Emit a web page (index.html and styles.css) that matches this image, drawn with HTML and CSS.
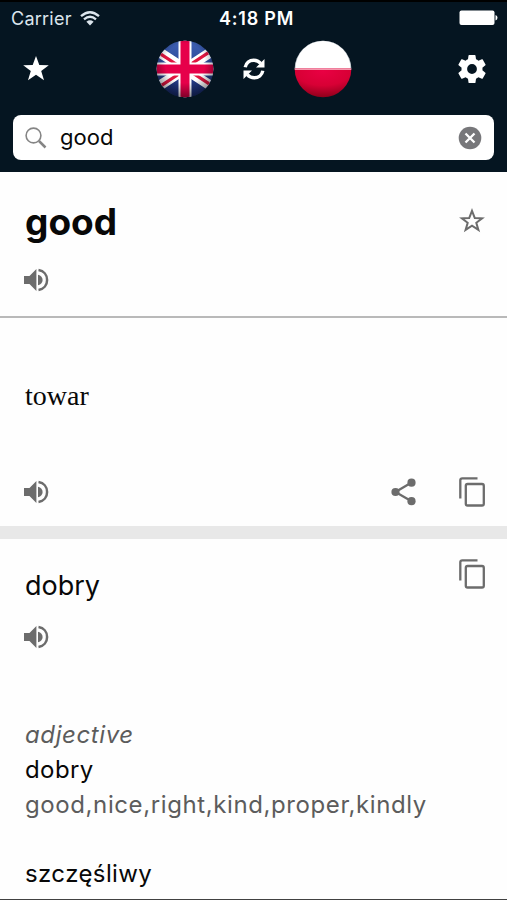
FILE: index.html
```html
<!DOCTYPE html>
<html lang="en">
<head>
    <meta charset="UTF-8">
    <meta name="viewport" content="width=device-width, initial-scale=1.0">
    <title>good</title>
    <link rel="stylesheet" href="styles.css">
</head>
<body>
    <svg class="symbols" width="0" height="0">
        <symbol id="speaker" viewBox="0 0 25 24">
            <path d="M0 8h5.5L12.4 1v22L5.5 16H0z"/>
            <path d="M14 6.800c3 .8 4.600 2.800 4.600 5.200s-1.600 4.400-4.600 5.200z"/>
            <path d="M14.500 2C20 2.900 23.100 7 23.100 12s-3.100 9.100-8.600 10" fill="none" stroke="currentColor" stroke-width="2.500"/>
        </symbol>
        <symbol id="copy" viewBox="0 0 26 30">
            <path d="M1.300 21.500V3.300q0-2 2-2H18.500" fill="none" stroke="currentColor" stroke-width="2.300"/>
            <rect x="6.800" y="7" width="18" height="21.500" rx="1.800" fill="none" stroke="currentColor" stroke-width="2.300"/>
        </symbol>
    </svg>
    <header>
        <div class="status">
            <div class="carrier">
                <span>Carrier</span>
                <svg width="20" height="15" viewBox="0 0 20 15">
                    <path d="M1 5.200Q10-2.800 19 5.200M4 8.400Q10 3.200 16 8.400" fill="none" stroke="currentColor" stroke-width="2.300"/>
                    <path d="M6.400 10.800Q10 7.900 13.600 10.800L10 14.500z"/>
                </svg>
            </div>
            <span class="time">4:18 PM</span>
            <svg class="battery" width="39" height="16" viewBox="0 0 39 16">
                <rect x=".5" y=".5" width="35" height="14.500" rx="2"/>
                <path d="M36.500 5q2 .5 2 2.700t-2 2.700z"/>
            </svg>
        </div>
        <nav>
            <svg class="favorites" width="26" height="25" viewBox="0 0 26 25">
                <path d="M13 0l3.300 9 9.500.200-7.600 5.800 2.800 9.300-8-5.500-8 5.500 2.800-9.300L.2 9.200 9.700 9z"/>
            </svg>
            <div class="languages">
                <svg width="58" height="58" viewBox="0 0 58 58">
                    <defs>
                        <clipPath id="disc"><circle cx="29" cy="29" r="28.300"/></clipPath>
                        <radialGradient id="shade" cx=".5" cy=".4" r=".62">
                            <stop offset=".55" stop-color="#000" stop-opacity="0"/>
                            <stop offset="1" stop-color="#000" stop-opacity=".5"/>
                        </radialGradient>
                        <linearGradient id="blue" x2="0" y2="1">
                            <stop offset="0" stop-color="#3e61b6"/>
                            <stop offset="1" stop-color="#172a70"/>
                        </linearGradient>
                    </defs>
                    <g clip-path="url(#disc)">
                        <path fill="url(#blue)" d="M0 0h58v58H0z"/>
                        <path d="M-3 8L61 50M-3 50L61 8" stroke="#fff" stroke-width="10"/>
                        <path d="M-3 9L29 30M61 49L29 28M-3 51L29 30M61 7L29 28" stroke="#df1640" stroke-width="3.200"/>
                        <path d="M29 0v58M0 29h58" stroke="#fff" stroke-width="13"/>
                        <path d="M29 0v58M0 29h58" stroke="#e6004a" stroke-width="9"/>
                        <circle cx="29" cy="29" r="29" fill="url(#shade)"/>
                    </g>
                </svg>
                <svg class="swap" width="22" height="22" viewBox="0 0 22 22">
                    <path d="M2.200 9.300C3 4.900 6.500 2.200 10.700 2.200c3 0 5.300 1.300 7 3.200M19.800 12.700c-.8 4.400-4.300 7.100-8.500 7.100-3 0-5.300-1.300-7-3.200" fill="none" stroke="currentColor" stroke-width="3.400"/>
                    <path d="M21.500 1v8.500H13zM.5 21v-8.500H9z"/>
                </svg>
                <svg width="58" height="58" viewBox="0 0 58 58">
                    <defs>
                        <radialGradient id="red" cx=".5" cy=".1" r=".95">
                            <stop offset="0" stop-color="#e90043"/>
                            <stop offset=".5" stop-color="#d80035"/>
                            <stop offset="1" stop-color="#810016"/>
                        </radialGradient>
                    </defs>
                    <g clip-path="url(#disc)">
                        <path fill="#fff" d="M0 0h58v29H0z"/>
                        <path fill="url(#red)" d="M0 28.500h58V58H0z"/>
                        <path d="M0 29.500h58" stroke="#f598ae"/>
                        <path d="M1 28.500a28 28 0 0 1 56 0" fill="none" stroke="#536574" stroke-opacity=".4"/>
                    </g>
                </svg>
            </div>
            <svg class="settings" width="28" height="28" viewBox="2 2 20 20">
                <path fill-rule="evenodd" d="M19.430 12.980c.04-.32.07-.64.07-.98s-.03-.66-.07-.98l2.110-1.650c.19-.15.24-.42.12-.64l-2-3.460c-.12-.22-.39-.3-.61-.22l-2.490 1c-.52-.4-1.080-.73-1.690-.98l-.38-2.650C14.460 2.180 14.250 2 14 2h-4c-.25 0-.46.18-.49.42l-.38 2.650c-.61.25-1.170.59-1.690.98l-2.490-1c-.23-.09-.49 0-.61.22l-2 3.460c-.13.22-.07.49.12.64l2.110 1.650c-.04.32-.07.65-.07.98s.03.66.07.98l-2.110 1.650c-.19.15-.24.42-.12.64l2 3.460c.12.22.39.3.61.22l2.490-1c.52.4 1.080.73 1.690.98l.38 2.650c.03.24.24.42.49.42h4c.25 0 .46-.18.49-.42l.38-2.650c.61-.25 1.170-.59 1.690-.98l2.490 1c.23.09.49 0 .61-.22l2-3.460c.12-.22.07-.49-.12-.64zM12 15.500a3.500 3.500 0 1 1 0-7 3.500 3.500 0 0 1 0 7z"/>
            </svg>
        </nav>
        <div class="search">
            <svg class="magnifier" width="22" height="22" viewBox="0 0 22 22">
                <circle cx="8.500" cy="8.500" r="7.400" stroke-width="1.600"/>
                <path d="M14 14l6.500 6.500" stroke-width="2.500"/>
            </svg>
            <span class="query">good</span>
            <svg width="24" height="24" viewBox="0 0 24 24">
                <circle cx="12" cy="12" r="11.300" fill="#77777a"/>
                <path d="M7.500 7.500l9 9M16.500 7.500l-9 9" stroke="#fff" stroke-width="2.300"/>
            </svg>
        </div>
    </header>
    <main>
        <section class="word">
            <div class="row">
                <h1>good</h1>
                <svg class="star" width="26" height="25" viewBox="0 0 26 25">
                    <path d="M13 2.800l2.800 7.300 7.300.200-5.800 4.500 2.100 7.100-6.400-4.300-6.400 4.300 2.100-7.100-5.800-4.500 7.300-.200z" fill="none" stroke="currentColor" stroke-width="2"/>
                </svg>
            </div>
            <svg class="speaker"><use href="#speaker"/></svg>
        </section>
        <section class="translation">
            <p class="serif">towar</p>
            <div class="row actions">
                <svg class="speaker"><use href="#speaker"/></svg>
                <svg class="share" width="25" height="28" viewBox="0 0 25 28">
                    <path d="M20.500 4.500L4.500 14l16 9.300" fill="none" stroke="currentColor" stroke-width="2.300"/>
                    <circle cx="20.500" cy="4.700" r="4.100"/>
                    <circle cx="4.500" cy="14" r="4.100"/>
                    <circle cx="20.500" cy="23.200" r="4.100"/>
                </svg>
                <svg class="copy"><use href="#copy"/></svg>
            </div>
        </section>
        <section class="details">
            <div class="row">
                <h2>dobry</h2>
                <svg class="copy"><use href="#copy"/></svg>
            </div>
            <svg class="speaker"><use href="#speaker"/></svg>
            <div class="meanings">
                <p class="type">adjective</p>
                <p class="term">dobry</p>
                <p class="synonyms">good,nice,right,kind,proper,kindly</p>
                <p class="term next">szczęśliwy</p>
                <p class="synonyms">happy,lucky,fortunate,good,blissful</p>
            </div>
        </section>
    </main>
</body>
</html>
```
FILE: styles.css
```css
* {
    box-sizing: border-box;
}
body {
    font-family: Inter, "Liberation Sans", sans-serif;
    margin: 0;
    height: 900px;
    overflow: hidden;
    background-color: #fefefe;
    color: #080808;
    border-bottom: 1px solid #414141;
    display: flex;
    flex-direction: column;
}
svg {
    display: block;
    flex: none;
    fill: currentColor;
}
.symbols {
    position: absolute;
}
h1, h2, p {
    margin: 0;
    font-weight: normal;
}
header {
    flex: none;
    height: 172px;
    border-top: 2px solid #000;
    background-color: #051521;
    color: #fff;
}
.status {
    display: grid;
    grid-template-columns: 1fr auto 1fr;
    align-items: center;
    height: 32px;
    padding: 0 9px 0 11px;
    font-size: 18px;
}
.carrier {
    display: flex;
    align-items: center;
    gap: 8px;
    color: #dce5ed;
    letter-spacing: 0.25px;
}
.time {
    font-weight: 600;
    letter-spacing: 0.8px;
    padding-left: 4px;
}
.battery {
    justify-self: end;
}
nav {
    display: flex;
    align-items: center;
    justify-content: space-between;
    height: 69px;
    padding: 0 21px 0 23px;
}
.languages {
    display: flex;
    align-items: center;
    gap: 29px;
}
.search {
    display: flex;
    align-items: center;
    height: 45px;
    margin: 12px 13px 0;
    padding: 0 12px;
    border-radius: 8px;
    background-color: #fff;
    color: #080808;
}
.magnifier {
    fill: none;
    stroke: #858585;
}
.query {
    flex: 1;
    margin-left: 13px;
    font-size: 22px;
    line-height: 26px;
    padding-bottom: 1px;
}
main {
    flex: 1;
    min-height: 0;
    overflow: hidden;
    color: #080808;
}
section {
    padding: 0 22px 0 24px;
}
.row {
    display: flex;
    align-items: center;
    justify-content: space-between;
}
.speaker, .share, .copy, .star {
    color: #6c6c6c;
}
.speaker {
    width: 25px;
    height: 24px;
}
.copy {
    width: 26px;
    height: 30px;
}
.word {
    height: 146px;
    padding-top: 25px;
    border-bottom: 2px solid #b9b9b9;
}
.word .speaker {
    margin-top: 21px;
}
h1, h2, .serif, .meanings {
    padding-left: 1px;
}
h1 {
    font-size: 37px;
    font-weight: bold;
    line-height: 50px;
}
.star {
    margin-bottom: 4px;
}
.translation {
    height: 221px;
    padding-top: 60px;
    border-bottom: 13px solid #e8e8e8;
}
.serif {
    font-family: "Liberation Serif", serif;
    font-size: 28px;
    line-height: 36px;
}
.actions {
    margin-top: 63px;
}
.share {
    margin-left: auto;
    margin-right: 43px;
}
.details {
    padding-top: 20px;
}
.details .row {
    height: 52px;
}
.details .row .copy {
    align-self: flex-start;
}
h2 {
    font-size: 27px;
}
.details .speaker {
    margin-top: 14px;
}
.meanings {
    margin-top: 69px;
    font-size: 24px;
    line-height: 34.8px;
    letter-spacing: 0.6px;
}
.type, .synonyms {
    color: #5c5c5c;
}
.type {
    font-style: italic;
}
.term {
    letter-spacing: 0.4px;
}
.next {
    margin-top: 34.8px;
}
```
